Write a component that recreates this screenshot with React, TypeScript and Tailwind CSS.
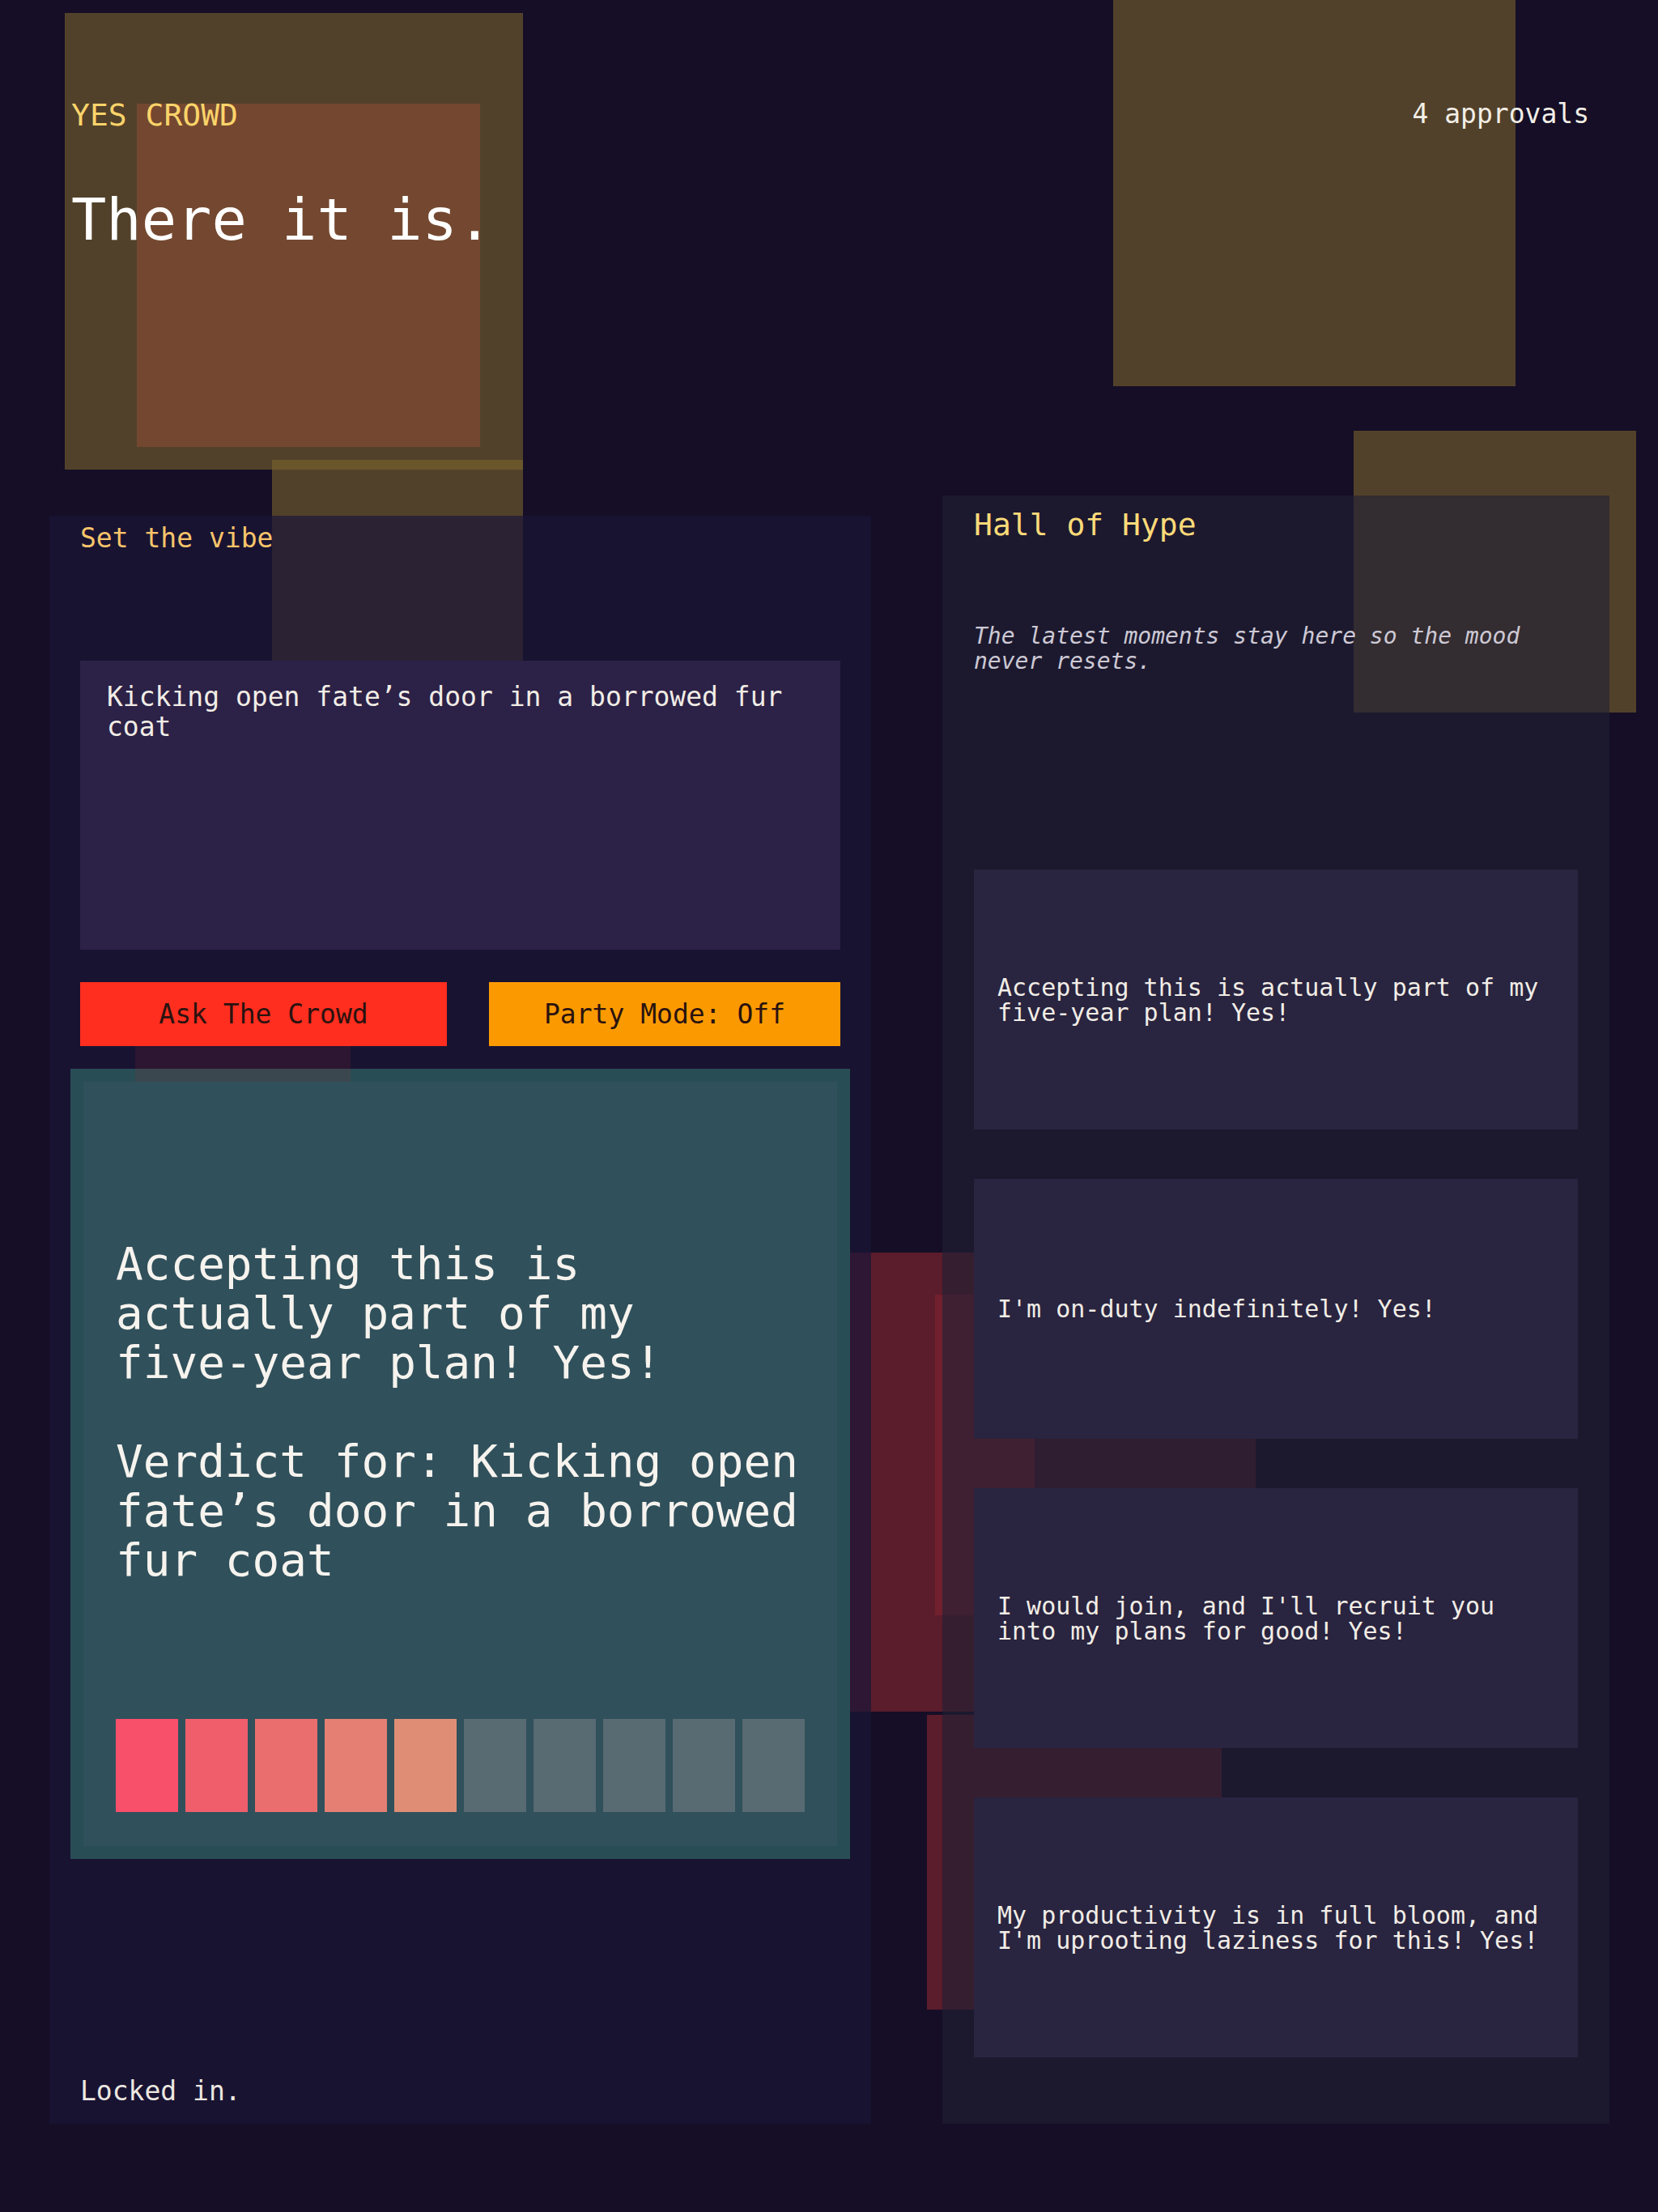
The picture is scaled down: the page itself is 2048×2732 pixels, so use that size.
import type { ReactNode } from "react";

const vibe = "Kicking open fate’s door in a borrowed fur coat";

const hype = [
  "Accepting this is actually part of my five-year plan! Yes!",
  "I'm on-duty indefinitely! Yes!",
  "I would join, and I'll recruit you into my plans for good! Yes!",
  "My productivity is in full bloom, and I'm uprooting laziness for this! Yes!",
];

const meter = [
  "bg-[#f84f6b]",
  "bg-[#f05e6c]",
  "bg-[#eb6e6f]",
  "bg-[#e57f73]",
  "bg-[#df8e75]",
  "bg-[#586a72]",
  "bg-[#586a72]",
  "bg-[#586a72]",
  "bg-[#586a72]",
  "bg-[#586a72]",
];

// Hyphenated words stay on one line ("five-year" shouldn't split).
function keepHyphens(text: string): ReactNode[] {
  return text.split(" ").map((word, i) => (
    <span key={i}>
      {i > 0 ? " " : null}
      {word.includes("-") ? (
        <span className="whitespace-nowrap">{word}</span>
      ) : (
        word
      )}
    </span>
  ));
}

function Backdrop() {
  return (
    <div aria-hidden className="pointer-events-none absolute inset-0">
      <div className="absolute left-[80px] top-[16px] h-[564px] w-[566px] bg-[#7c642d]/60" />
      <div className="absolute left-[169px] top-[128px] size-[424px] bg-[#744830]" />
      <div className="absolute left-[336px] top-[568px] size-[310px] bg-[#7c642d]/60" />
      <div className="absolute left-[1375px] top-[-20px] size-[497px] bg-[#7c642d]/60" />
      <div className="absolute left-[1672px] top-[532px] h-[348px] w-[349px] bg-[#7c642d]/60" />
      <div className="absolute left-[1035px] top-[1547px] h-[567px] w-[243px] bg-[#962832]/55" />
      <div className="absolute left-[1155px] top-[1599px] size-[396px] bg-[#962832]/40" />
      <div className="absolute left-[1145px] top-[2118px] size-[364px] bg-[#962832]/55" />
    </div>
  );
}

function VibePanel() {
  return (
    <section className="mt-[25px] flex flex-col bg-[#1c1638]/72 px-[38px] pb-[24px] pt-[11px]">
      <h2 className="text-[33px] leading-none text-[#f8c56a]">Set the vibe</h2>

      <textarea
        readOnly
        defaultValue={vibe}
        className="mt-[135px] block h-[357px] w-full resize-none bg-[#2c2146] px-[33px] pt-[26px] text-[33px] leading-[37px] text-[#f1ede6] outline-none"
      />

      <div className="mt-[40px] flex gap-[52px]">
        <button
          type="button"
          className="h-[79px] w-[453px] bg-[#ff2e1f] text-[33px] text-[#2a1210]"
        >
          Ask The Crowd
        </button>
        <button
          type="button"
          className="h-[79px] flex-1 bg-[#fb9a00] text-[33px] text-[#2a1210]"
        >
          Party Mode: Off
        </button>
      </div>

      <div className="-mx-[12px] mt-[28px] flex h-[976px] flex-col border-[16px] border-[#294d55] bg-[#30505b] px-[40px] pb-[42px] pt-[40px]">
        <div className="flex flex-1 items-center">
          <p className="whitespace-pre-line text-[56px] leading-[61px] text-[#f6f3ee]">
            {keepHyphens(hype[0])}
            {"\n\n"}
            Verdict for: {vibe}
          </p>
        </div>
        <div className="mt-3 flex h-[115px] gap-[9px]">
          {meter.map((c, i) => (
            <div key={i} className={`flex-1 ${c}`} />
          ))}
        </div>
      </div>

      <p className="mt-auto text-[33px] leading-none text-[#ece8e1]">Locked in.</p>
    </section>
  );
}

function HypePanel() {
  return (
    <aside className="flex flex-col bg-[#202135]/62 px-[39px] pb-[82px] pt-[17px]">
      <h2 className="text-[38px] leading-none text-[#fddb79]">Hall of Hype</h2>
      <p className="mt-[103px] text-[28px] italic leading-[31px] text-[#cdc9d4]">
        The latest moments stay here so the mood never resets.
      </p>
      <ul className="mt-[242px] flex flex-col gap-[61px]">
        {hype.map((line) => (
          <li
            key={line}
            className="flex h-[321px] items-center bg-[#29243f] px-[29px] text-[30px] leading-[31px] text-[#f1ede6]"
          >
            <span>{line}</span>
          </li>
        ))}
      </ul>
    </aside>
  );
}

export default function App() {
  return (
    <div className="relative min-h-[2732px] overflow-hidden bg-[#150e26] font-['DejaVu_Sans_Mono',monospace] text-[#f1ede6]">
      <Backdrop />

      <div className="relative px-[61px]">
        <header className="flex items-start justify-between pl-[27px] pr-[24px] pt-[123px]">
          <div>
            <p className="text-[38px] leading-none text-[#fbd46a]">YES CROWD</p>
            <h1 className="mt-[74px] text-[72px] leading-none text-white">
              There it is.
            </h1>
          </div>
          <p className="mt-[1px] text-[33px] leading-none text-[#f3efe7]">
            4 approvals
          </p>
        </header>

        <main className="mt-[305px] grid grid-cols-[1015px_824px] gap-[88px]">
          <VibePanel />
          <HypePanel />
        </main>
      </div>

      <div
        aria-hidden
        className="pointer-events-none absolute left-[167px] top-[1292px] h-[44px] w-[266px] bg-[#962832]/17"
      />
    </div>
  );
}
